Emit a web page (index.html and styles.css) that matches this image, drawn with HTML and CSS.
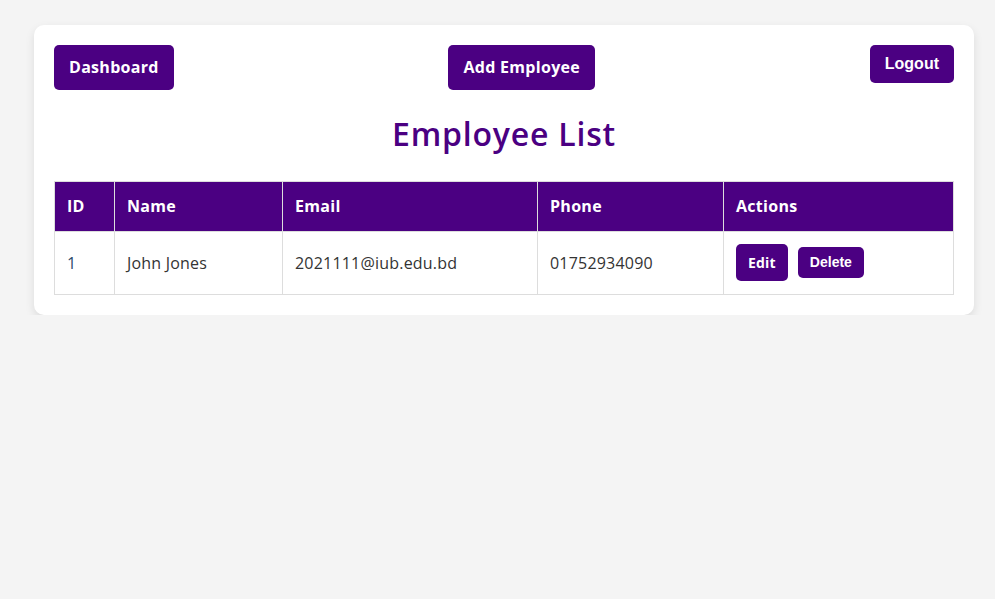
FILE: index.html
```html
<!DOCTYPE html>
<html>
<head>
<meta charset="utf-8">
<link rel="stylesheet" href="styles.css">
</head>
<body>
<div class="container">
  <div class="topbar">
    <a class="btn" href="#">Dashboard</a>
    <a class="btn" href="#">Add Employee</a>
    <button class="btn btn-sys">Logout</button>
  </div>
  <h2 class="title">Employee List</h2>
  <table class="tbl">
    <colgroup>
      <col class="c1"><col class="c2"><col class="c3"><col class="c4"><col class="c5">
    </colgroup>
    <thead>
      <tr><th>ID</th><th>Name</th><th>Email</th><th>Phone</th><th>Actions</th></tr>
    </thead>
    <tbody>
      <tr>
        <td class="id">1</td>
        <td>John Jones</td>
        <td>2021111@iub.edu.bd</td>
        <td>01752934090</td>
        <td class="actions"><a class="act" href="#">Edit</a><button class="act-del">Delete</button></td>
      </tr>
    </tbody>
  </table>
</div>
</body>
</html>
```
FILE: styles.css
```css
html, body { margin: 0; }
body {
  background: #f4f4f4;
  font-family: "Open Sans", "Liberation Sans", sans-serif;
  padding: 25px 21px 0 34px;
}
.container {
  background: #fff;
  border-radius: 10px;
  box-shadow: 0 4px 10px rgba(0,0,0,0.1);
  padding: 20px;
}
.topbar {
  display: flex;
  justify-content: space-between;
  align-items: flex-start;
}
.btn {
  display: inline-block;
  background: #4b0082;
  color: #fff;
  text-decoration: none;
  font-weight: 700;
  font-size: 16px;
  line-height: 25px;
  padding: 10px 15px;
  border-radius: 5px;
  border: none;
  letter-spacing: 0.3px;
}
.btn-sys {
  font-family: "Liberation Sans", Arial, sans-serif;
  line-height: 18px;
  letter-spacing: 0;
}
.title {
  text-align: center;
  color: #4b0082;
  font-size: 32px;
  font-weight: 600;
  line-height: 48px;
  margin: 20px 0 23px;
  letter-spacing: 0.8px;
}
.tbl {
  width: 100%;
  border-collapse: collapse;
  table-layout: fixed;
}
.c1 { width: 60px; }
.c2 { width: 168px; }
.c3 { width: 255px; }
.c4 { width: 186px; }
.tbl th, .tbl td {
  border: 1px solid #ddd;
  padding: 12px;
  text-align: left;
  font-size: 16px;
  line-height: 24px;
}
.tbl th {
  background: #4b0082;
  color: #fff;
  font-weight: 700;
  line-height: 25px;
  letter-spacing: 0.3px;
}
.tbl td {
  color: #333;
  padding-bottom: 13px;
  letter-spacing: 0.2px;
}
.tbl td.id { color: #2c4a6b; }
.actions { white-space: nowrap; }
.act {
  display: inline-block;
  background: #4b0082;
  color: #fff;
  text-decoration: none;
  font-weight: 700;
  font-size: 14px;
  line-height: 21px;
  padding: 8px 12px;
  border-radius: 5px;
  vertical-align: middle;
  margin-right: 10px;
}
.act-del {
  background: #4b0082;
  color: #fff;
  border: none;
  font-family: "Liberation Sans", Arial, sans-serif;
  font-weight: 700;
  font-size: 14px;
  line-height: 15px;
  padding: 8px 12px;
  border-radius: 5px;
  vertical-align: middle;
}
```
